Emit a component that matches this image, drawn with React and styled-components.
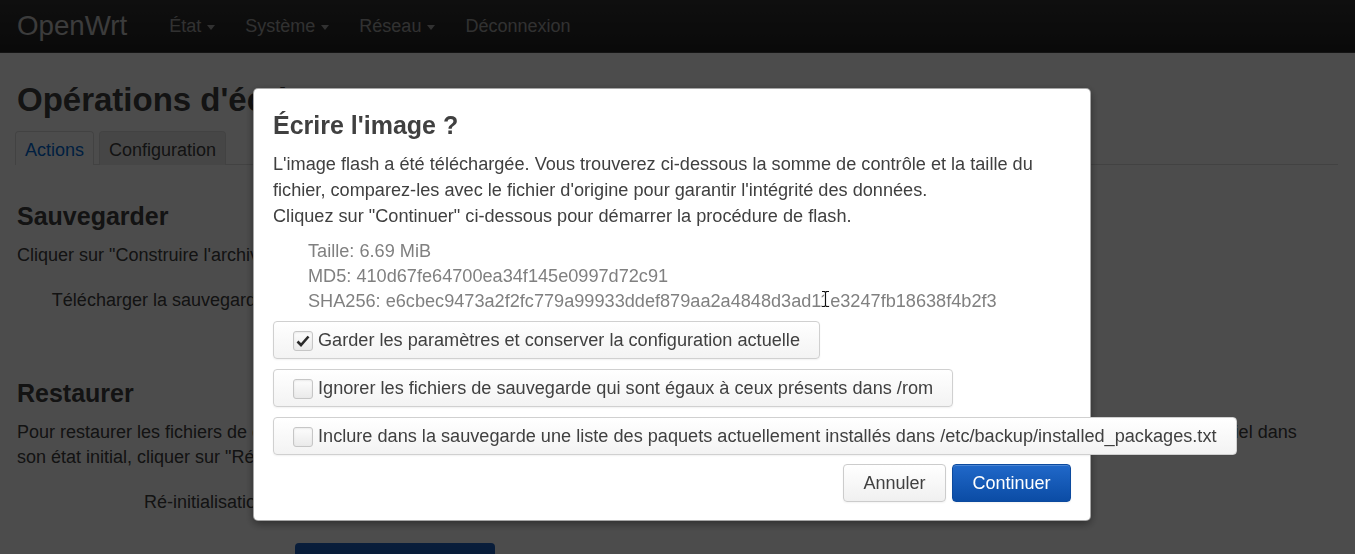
import React from "react";
import styled, { createGlobalStyle } from "styled-components";

const Global = createGlobalStyle`
  html, body { margin: 0; padding: 0; overflow: hidden; height: 100%; }
  body {
    font-family: "Liberation Sans", Arial, Helvetica, sans-serif;
    font-size: 18px;
    line-height: 25px;
    color: #404040;
    background: #fff;
  }
  * { box-sizing: border-box; }
`;

const TopBar = styled.header`
  height: 53px;
  background: linear-gradient(#333, #222);
  border-bottom: 1px solid #444;
  display: flex;
  align-items: center;
  padding: 0 17px;
  gap: 42px;
`;

const Brand = styled.div`
  font-size: 27.7px;
  color: #c8c8c8;
  line-height: 53px;
  margin-top: -2px;
`;

const Nav = styled.nav`
  display: flex;
  align-items: center;
  gap: 30px;
  margin-top: 0;
`;

const NavItem = styled.span`
  display: inline-flex;
  align-items: center;
  gap: 6px;
  font-size: 18px;
  color: #a6a6a6;
`;

const Caret = styled.span`
  display: inline-block;
  width: 0;
  height: 0;
  border-left: 4.5px solid transparent;
  border-right: 4.5px solid transparent;
  border-top: 5px solid #a6a6a6;
  margin-top: 2px;
`;

const Page = styled.main`
  padding: 0 17px;
`;

const Title = styled.h2`
  margin: 27px 0 11px;
  font-size: 33px;
  line-height: 40px;
  font-weight: bold;
  color: #404040;
`;

const Tabs = styled.ul`
  list-style: none;
  margin: 0 0 0 -2px;
  padding: 0;
  display: flex;
  gap: 5px;
  border-bottom: 1px solid #ddd;
`;

const Tab = styled.li`
  padding: 6px 9px 2px;
  border: 1px solid #ddd;
  border-bottom: none;
  border-radius: 4px 4px 0 0;
  margin-bottom: -1px;
  background: ${(p) => (p.$active ? "#fff" : "#ececec")};
  color: ${(p) => (p.$active ? "#0069d6" : "#404040")};
  height: 34px;
`;

const Section = styled.h3`
  margin: ${(p) => p.$top}px 0 9px;
  font-size: 25px;
  line-height: 35px;
  font-weight: bold;
  color: #404040;
`;

const Para = styled.p`
  margin: 0;
  white-space: nowrap;
`;

const FormRow = styled.div`
  display: grid;
  grid-template-columns: 249px auto;
  column-gap: 29px;
  align-items: center;
  margin-top: ${(p) => p.$top}px;
  min-height: 38px;
`;

const Label = styled.label`
  text-align: right;
`;

const PrimaryBlock = styled.div`
  width: 200px;
  height: 44px;
  border-radius: 4px;
  background: linear-gradient(#1f64c5, #0f4fa8);
`;

const Overlay = styled.div`
  position: fixed;
  inset: 0;
  background: rgba(0, 0, 0, 0.7);
`;

const Modal = styled.div`
  position: fixed;
  left: 253px;
  top: 88px;
  width: 838px;
  background: #fff;
  border: 1px solid rgba(0, 0, 0, 0.35);
  border-radius: 5px;
  box-shadow: 0 3px 9px rgba(0, 0, 0, 0.4);
  padding: 19px 19px 18px;
  font-size: 18.15px;
`;

const ModalTitle = styled.h4`
  margin: 0 0 9px;
  font-size: 25px;
  line-height: 34px;
  font-weight: bold;
  color: #404040;
`;

const ModalText = styled.p`
  margin: 0 0 10px;
  line-height: 26px;
`;

const InfoList = styled.ul`
  list-style: none;
  margin: 0 0 7px;
  padding: 0 0 0 35px;
  color: #808080;
`;

const Option = styled.label`
  display: flex;
  width: max-content;
  align-items: center;
  gap: 5px;
  padding: 6px 19px 5px;
  border: 1px solid #d0d0d0;
  border-radius: 4px;
  background: linear-gradient(#fff, #f3f3f3);
  box-shadow: 0 1px 2px rgba(0, 0, 0, 0.06);
  white-space: nowrap;
  margin-bottom: 10px;
  color: #404040;
`;

const Box = styled.span`
  width: 20px;
  height: 20px;
  border: 1px solid #c6c6c6;
  border-radius: 3px;
  background: linear-gradient(#fdfdfd, #eaeaea);
  box-shadow: inset 0 1px 2px rgba(0, 0, 0, 0.08);
  display: inline-flex;
  align-items: center;
  justify-content: center;
  flex: none;
`;

const Footer = styled.div`
  display: flex;
  justify-content: flex-end;
  gap: 6px;
  margin-top: -1px;
`;

const Button = styled.button`
  font: inherit;
  font-size: 18px;
  line-height: 25px;
  height: 38px;
  padding: 0 19.5px;
  border-radius: 4px;
  cursor: pointer;
  border: 1px solid ${(p) => (p.$primary ? "#0c4a9e" : "#ccc")};
  color: ${(p) => (p.$primary ? "#fff" : "#404040")};
  background: ${(p) =>
    p.$primary ? "linear-gradient(#2068c9, #0b4ca5)" : "linear-gradient(#fff, #f0f0f0)"};
  box-shadow: inset 0 1px 0 rgba(255, 255, 255, 0.2), 0 1px 2px rgba(0, 0, 0, 0.05);
`;

const Cursor = styled.svg`
  position: absolute;
  left: 567px;
  top: 201px;
`;

function Checkbox({ checked }) {
  return (
    <Box>
      {checked && (
        <svg width="16" height="14" viewBox="0 0 16 14">
          <path d="M2.5 7.5 L6 11 L13.5 2.5" fill="none" stroke="#2a2a2a" strokeWidth="2.6" strokeLinejoin="miter" />
        </svg>
      )}
    </Box>
  );
}

export default function App() {
  return (
    <>
      <Global />
      <TopBar>
        <Brand>OpenWrt</Brand>
        <Nav>
          <NavItem>État<Caret /></NavItem>
          <NavItem>Système<Caret /></NavItem>
          <NavItem>Réseau<Caret /></NavItem>
          <NavItem>Déconnexion</NavItem>
        </Nav>
      </TopBar>
      <Page>
        <Title>Opérations d'écriture</Title>
        <Tabs>
          <Tab $active>Actions</Tab>
          <Tab>Configuration</Tab>
        </Tabs>
        <Section $top={34}>Sauvegarder</Section>
        <Para>Cliquer sur "Construire l'archive" pour télécharger une archive tar des fichiers de configuration actuels.</Para>
        <FormRow $top={13}>
          <Label>Télécharger la sauvegarde</Label>
          <span />
        </FormRow>
        <Section $top={57}>Restaurer</Section>
        <Para>
          Pour restaurer les fichiers de configuration, vous pouvez téléverser ici une archive de sauvegarde générée précédemment. Pour réinitialiser le micrologiciel dans
          <br />
          son état initial, cliquer sur "Ré-initialiser" (possible seulement avec les images squashfs).
        </Para>
        <FormRow $top={13}>
          <Label>Ré-initialisation</Label>
          <span />
        </FormRow>
        <FormRow $top={22}>
          <span />
          <PrimaryBlock />
        </FormRow>
      </Page>
      <Overlay />
      <Modal>
        <ModalTitle>Écrire l'image ?</ModalTitle>
        <ModalText>
          L'image flash a été téléchargée. Vous trouverez ci-dessous la somme de contrôle et la taille du fichier, comparez-les avec le fichier d'origine pour garantir l'intégrité des données.
          <br />
          Cliquez sur "Continuer" ci-dessous pour démarrer la procédure de flash.
        </ModalText>
        <InfoList>
          <li>Taille: 6.69 MiB</li>
          <li>MD5: 410d67fe64700ea34f145e0997d72c91</li>
          <li>SHA256: e6cbec9473a2f2fc779a99933ddef879aa2a4848d3ad11e3247fb18638f4b2f3</li>
        </InfoList>
        <Option>
          <Checkbox checked />
          Garder les paramètres et conserver la configuration actuelle
        </Option>
        <Option>
          <Checkbox />
          Ignorer les fichiers de sauvegarde qui sont égaux à ceux présents dans /rom
        </Option>
        <Option>
          <Checkbox />
          Inclure dans la sauvegarde une liste des paquets actuellement installés dans /etc/backup/installed_packages.txt
        </Option>
        <Footer>
          <Button>Annuler</Button>
          <Button $primary>Continuer</Button>
        </Footer>
        <Cursor width="9" height="18" viewBox="0 0 9 18">
          <path d="M1 1.5 H3.5 L4.5 2.5 L5.5 1.5 H8 M4.5 2.5 V15.5 M1 16.5 H3.5 L4.5 15.5 L5.5 16.5 H8" fill="none" stroke="#fff" strokeWidth="2.6" />
          <path d="M1 1.5 H3.5 L4.5 2.5 L5.5 1.5 H8 M4.5 2.5 V15.5 M1 16.5 H3.5 L4.5 15.5 L5.5 16.5 H8" fill="none" stroke="#111" strokeWidth="1.1" />
        </Cursor>
      </Modal>
    </>
  );
}
